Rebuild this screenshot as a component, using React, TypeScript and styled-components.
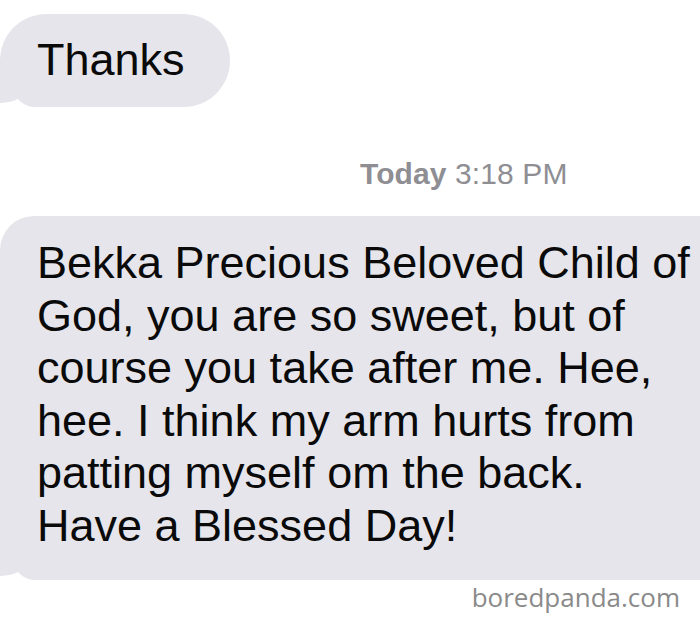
import React, { FC } from 'react';
import styled, { createGlobalStyle } from 'styled-components';

const GlobalStyle = createGlobalStyle`
  html, body {
    margin: 0;
    padding: 0;
    background: #ffffff;
  }
  body {
    font-family: 'Liberation Sans', Arial, sans-serif;
    -webkit-font-smoothing: antialiased;
  }
`;

const Screen = styled.div`
  width: 700px;
  height: 627px;
  overflow: hidden;
  background: #ffffff;
  display: flex;
  flex-direction: column;
  padding-top: 14px;
  box-sizing: border-box;
`;

const Bubble = styled.div<{ $wide?: boolean }>`
  position: relative;
  align-self: flex-start;
  background: #e6e5eb;
  color: #0a0a0a;
  font-size: 45px;
  line-height: 52.5px;
  box-sizing: border-box;
  border-radius: ${(p) => (p.$wide ? '34px 34px 34px 0' : '47px 47px 47px 0')};
  padding: ${(p) => (p.$wide ? '21px 0 28px 37px' : '20px 45px 20px 37px')};
  width: ${(p) => (p.$wide ? '740px' : 'auto')};
  height: ${(p) => (p.$wide ? '364px' : '93px')};
`;

const Tail = styled.svg`
  position: absolute;
  left: 0;
  bottom: 0;
  width: 34px;
  height: 10px;
  display: block;
`;

const Stamp = styled.div`
  margin-top: 50px;
  padding-left: 360px;
  height: 59px;
  font-size: 30px;
  line-height: 34px;
  color: #8e8e93;
  letter-spacing: 0.1px;

  b {
    font-weight: 700;
  }
`;

const Watermark = styled.div`
  align-self: flex-end;
  margin-right: 20px;
  margin-top: 1px;
  font-family: 'Open Sans', 'Liberation Sans', sans-serif;
  font-size: 26px;
  line-height: 32px;
  color: #8a8a8a;
`;

const BubbleTail: FC = () => (
  <Tail viewBox='0 0 34 10' preserveAspectRatio='none'>
    <path d='M0 10 L0 6 C8 5.5 14 4.5 18 2 C21 5 25 9 33 10 Z' fill='#ffffff' />
  </Tail>
);

const App: FC = () => {
  return (
    <>
      <GlobalStyle />
      <Screen>
        <Bubble>
          Thanks
          <BubbleTail />
        </Bubble>
        <Stamp>
          <b>Today</b> 3:18 PM
        </Stamp>
        <Bubble $wide>
          Bekka Precious Beloved Child of
          <br />
          God, you are so sweet, but of
          <br />
          course you take after me. Hee,
          <br />
          hee. I think my arm hurts from
          <br />
          patting myself om the back.
          <br />
          Have a Blessed Day!
          <BubbleTail />
        </Bubble>
        <Watermark>boredpanda.com</Watermark>
      </Screen>
    </>
  );
};

export default App;
